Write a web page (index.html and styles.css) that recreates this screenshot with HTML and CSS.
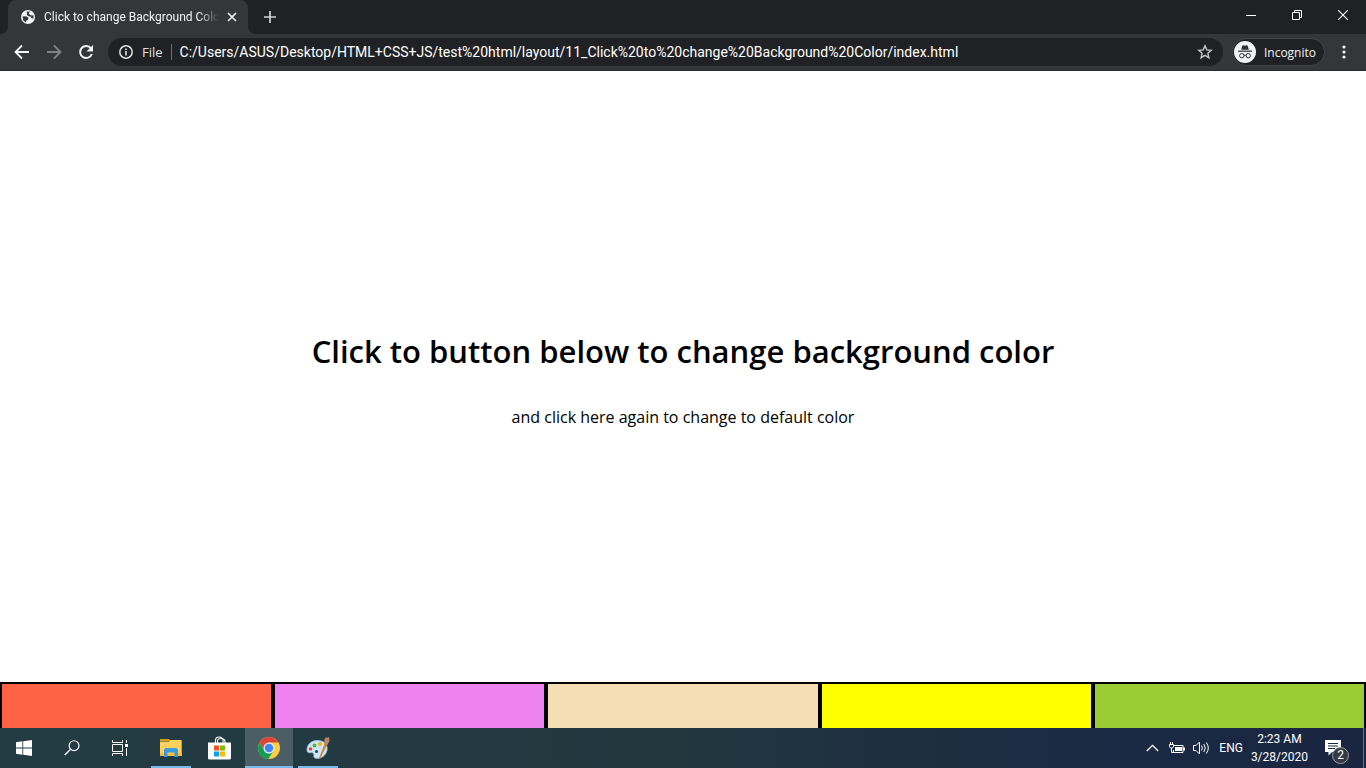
FILE: index.html
```html
<!DOCTYPE html>
<html lang="en">
<head>
<meta charset="utf-8">
<meta name="viewport" content="width=device-width, initial-scale=1">
<title>Click to change Background Color</title>
<link rel="stylesheet" href="styles.css">
</head>
<body>
<div class="desktop">
  <header class="browser">
    <div class="tabstrip">
      <div class="tab">
        <svg class="tab-icon" width="14" height="14" viewBox="0 0 14 14" aria-hidden="true"><circle cx="7" cy="7" r="7" fill="#f1f3f4"/><path d="M1.5 6.5 5 6.2 7.5 7.7 6.8 10 5.3 10.4 5 12.5 2.4 10.6zM5.4 1.8 8.8 1.4 7.8 3.6 9.5 5.3 12.6 5.6 12.3 8.7 10.4 8 9.8 6.5 7.6 6.3 5.6 4.8 6.2 3.7z" fill="#35363a"/></svg>
        <span class="tab-title">Click to change Background Color</span>
        <button class="plain tab-close" aria-label="Close tab"><svg width="10" height="10" viewBox="0 0 10 10"><path d="M1 1l8 8M9 1L1 9" stroke="#f1f3f4" stroke-width="1.7"/></svg></button>
      </div>
      <button class="plain new-tab" aria-label="New tab"><svg width="12" height="12" viewBox="0 0 12 12"><path d="M6 0v12M0 6h12" stroke="#d0d2d5" stroke-width="1.7"/></svg></button>
      <div class="window-controls">
        <button class="plain control" aria-label="Minimize"><svg width="10" height="10" viewBox="0 0 10 10"><path d="M0 5.5h10" stroke="#fff"/></svg></button>
        <button class="plain control" aria-label="Restore"><svg width="10" height="10" viewBox="0 0 10 10" fill="none" stroke="#fff"><path d="M.5 2.5h7v7h-7zM2.5 2.5v-2h7v7h-2"/></svg></button>
        <button class="plain control" aria-label="Close"><svg width="10" height="10" viewBox="0 0 10 10"><path d="M0 0l10 10M10 0L0 10" stroke="#fff" stroke-width="1.1"/></svg></button>
      </div>
    </div>
    <div class="toolbar">
      <button class="plain nav" aria-label="Back"><svg width="16" height="16" viewBox="0 0 16 16" fill="none" stroke="#f1f3f4" stroke-width="1.8"><path d="M15 8H2M8 1.5L1.5 8 8 14.5"/></svg></button>
      <button class="plain nav" aria-label="Forward"><svg width="16" height="16" viewBox="0 0 16 16" fill="none" stroke="#808286" stroke-width="1.8"><path d="M1 8h13M8 1.5L14.5 8 8 14.5"/></svg></button>
      <button class="plain nav" aria-label="Reload"><svg width="16" height="16" viewBox="0 0 16 16"><path d="M13 4.5A6 6 0 1 0 13.8 10" fill="none" stroke="#f1f3f4" stroke-width="2"/><path d="M15 1v6.5H8.5z" fill="#f1f3f4"/></svg></button>
      <div class="omnibox">
        <svg width="14" height="14" viewBox="0 0 14 14" aria-hidden="true"><circle cx="7" cy="7" r="6.2" fill="none" stroke="#dfe1e5" stroke-width="1.5"/><path d="M7 6v4.5M7 3.4v1.6" stroke="#dfe1e5" stroke-width="1.6"/></svg>
        <label class="scheme" for="address">File</label>
        <input class="address" id="address" type="text" value="C:/Users/ASUS/Desktop/HTML+CSS+JS/test%20html/layout/11_Click%20to%20change%20Background%20Color/index.html">
        <button class="plain" aria-label="Bookmark this page"><svg class="star" width="16" height="16" viewBox="0 0 16 16"><path d="M8 1.8l1.8 4.1 4.4.4-3.3 3 1 4.4L8 11.4l-3.9 2.3 1-4.4-3.3-3 4.4-.4z" fill="none" stroke="#c4c7cb" stroke-width="1.4"/></svg></button>
      </div>
      <button class="plain incognito"><svg width="22" height="22" viewBox="0 0 22 22"><circle cx="11" cy="11" r="11" fill="#f1f3f4"/><path d="M7.2 8.7L8.3 4.8q.3-.8 1.1-.5l1.6.4 1.6-.4q.8-.3 1.1.5l1.1 3.9z" fill="#303134"/><path d="M4 10.2h14" stroke="#303134" stroke-width="1.2"/><g fill="none" stroke="#303134" stroke-width="1"><circle cx="7.8" cy="14.7" r="2.2"/><circle cx="14.2" cy="14.7" r="2.2"/><path d="M10 14.4q1-.7 2 0"/></g></svg><span>Incognito</span></button>
      <button class="plain menu" aria-label="Menu"><svg width="4" height="14" viewBox="0 0 4 14" fill="#f1f3f4"><circle cx="2" cy="2" r="1.6"/><circle cx="2" cy="7" r="1.6"/><circle cx="2" cy="12" r="1.6"/></svg></button>
    </div>
  </header>

  <main class="page">
    <section class="message">
      <h1 class="headline">Click to button below to change background color</h1>
      <p class="hint">and click here again to change to default color</p>
    </section>
    <div class="swatches">
      <button class="swatch tomato" aria-label="Tomato"></button>
      <button class="swatch violet" aria-label="Violet"></button>
      <button class="swatch wheat" aria-label="Wheat"></button>
      <button class="swatch yellow" aria-label="Yellow"></button>
      <button class="swatch yellowgreen" aria-label="Yellow green"></button>
    </div>
  </main>

  <footer class="taskbar">
    <div class="system">
      <button class="plain task" aria-label="Start"><svg width="16" height="16" viewBox="0 0 16 16" fill="#fff"><path d="M0 2.2L6.4 1.3v6.2H0zM7.2 1.2L16 0v7.5H7.2zM0 8.4h6.4v6.3L0 13.8zM7.2 8.4H16V16l-8.8-1.2z"/></svg></button>
      <button class="plain task" aria-label="Search"><svg width="16" height="16" viewBox="0 0 17 17" fill="none" stroke="#f5f7f8"><circle cx="10.7" cy="6" r="5.2" stroke-width="1.3"/><path d="M7 9.8L.8 16" stroke-width="1.5"/></svg></button>
      <button class="plain task" aria-label="Task view"><svg width="16" height="16" viewBox="0 0 16 16" fill="none" stroke="#fff"><path d="M.5 0v2.5h10V0M.5 4.5h10v7H.5zM.5 16v-2.5h10V16M14.5 0v3M14.5 8v8"/><path d="M13 4h3v3h-3z" fill="#fff" stroke="none"/></svg></button>
    </div>
    <div class="apps">
      <button class="plain task running" aria-label="File Explorer"><svg width="22" height="20" viewBox="0 0 22 20"><path d="M0 1.5Q0 1 .5 1H9l1.5 2H0z" fill="#dc9d12"/><path d="M0 3.6h9L10.5 2H21q.7 0 .7.7V18H0z" fill="#ffd15b"/><path d="M0 15h22v3H0z" fill="#f6be3c"/><path d="M4 19v-7.5L5.5 10h11l1.5 1.5V19h-3.5v-4.5h-7V19z" fill="#3a9be0"/></svg></button>
      <button class="plain task" aria-label="Microsoft Store"><svg width="24" height="24" viewBox="0 0 24 24"><path d="M7.5 7V4.5q0-3.500 3.500-3.500t4 3.500V7M9.500 7V5q0-2.500 3.500-2.500T17 5v2" fill="none" stroke="#fff" stroke-width="1.1"/><path d="M0 6.5h23V22q0 1.500-1.500 1.500h-20Q0 23.500 0 22z" fill="#fff"/><path d="M6 9.500h5v5H6z" fill="#f25022"/><path d="M12 9.500h5v5h-5z" fill="#7fba00"/><path d="M6 15.500h5v5H6z" fill="#00a4ef"/><path d="M12 15.500h5v5h-5z" fill="#ffb900"/></svg></button>
      <button class="plain task active" aria-label="Google Chrome"><svg width="22" height="22" viewBox="0 0 22 22"><circle cx="11" cy="11" r="11" fill="#ffcd40"/><path d="M1.5 5.5A11 11 0 0 1 20.5 5.5H11L6.2 13.7z" fill="#db4437"/><path d="M1.5 5.5L6.2 13.7Q8 16.500 11 16.500L10.200 22A11 11 0 0 1 1.500 5.500z" fill="#109d58"/><path d="M10.200 22L15.800 13.700 11 16.500 9 16z" fill="#109d58"/><circle cx="11" cy="11" r="5.500" fill="#f1f1f1"/><circle cx="11" cy="11" r="4.300" fill="#4285f4"/></svg></button>
      <button class="plain task running" aria-label="Paint"><svg width="24" height="24" viewBox="0 0 24 24"><path d="M1 15C0 8 7 3.500 13 4.500c7 .5 9 6 8 10-1 5-6 8.500-11 8-4-1-1-4-3-5.500-2-1-5 1-6-2z" fill="#cbe6f6" stroke="#86b8d6" stroke-width=".7"/><circle cx="4.500" cy="13" r="1.800" fill="#e54435"/><circle cx="8.500" cy="9.500" r="1.900" fill="#56b430"/><circle cx="14" cy="8" r="2" fill="#f4b01b"/><circle cx="10.500" cy="15.500" r="1.600" fill="#254b62"/><path d="M12.500 23.500L18.500 8l2.500 1L14.500 22z" fill="#dc8130"/><path d="M18 8.500L18.500 3 20 1l1 1 2-1 .5 4L21 9.500z" fill="#b98761"/></svg></button>
    </div>
    <div class="tray">
      <button class="plain" aria-label="Show hidden icons"><svg width="13" height="8" viewBox="0 0 13 8"><path d="M.8 7L6.5 1.3 12.2 7" fill="none" stroke="#fff" stroke-width="1.3"/></svg></button>
      <svg class="battery" width="16" height="12" viewBox="0 0 16 12" role="img" aria-label="Battery charging"><path d="M5 3.500h9v7H4.500V8" fill="none" stroke="#fff"/><path d="M6 5h7v4H6zM14 5.500h2v3h-2z" fill="#fff"/><path d="M.5 2.500h4v2l-1 1.500h-2l-1-1.500zM1.500 0v2.500M3.500 0v2.500M2.500 6v4.500H5" fill="none" stroke="#fff"/></svg>
      <svg class="volume" width="17" height="14" viewBox="0 0 17 14" fill="none" stroke="#fff" role="img" aria-label="Volume"><path d="M.5 4.500h2.500l3.500-3.500v12L3 9.500H.5z"/><path d="M8.500 4.500q1.800 2.500 0 5M10.800 3q3 4 0 8M13.300 1.500q4 5.500 0 11"/></svg>
      <span class="language">ENG</span>
      <time class="clock" datetime="2020-03-28T02:23">2:23 AM<br>3/28/2020</time>
      <button class="plain notifications" aria-label="2 notifications"><svg width="17" height="16" viewBox="0 0 17 16"><path d="M0 0h16v12H7l-3.500 3.500V12H0z" fill="#fff"/><path d="M3 3.500h10M3 6h10M3 8.500h7" stroke="#1b2a43"/></svg><span class="badge">2</span></button>
      <span class="peek"></span>
    </div>
  </footer>
</div>
</body>
</html>
```
FILE: styles.css
```css
* { box-sizing: border-box; }
body { margin: 0; font-family: "Open Sans", "Noto Sans", sans-serif; }
svg { display: block; flex: none; }
.plain { display: flex; align-items: center; justify-content: center; padding: 0; border: 0; background: none; color: inherit; font: inherit; }
.desktop { display: flex; flex-direction: column; height: 100vh; overflow: hidden; }

/* Browser frame */
.browser { background: #35363a; color: #f1f3f4; border-bottom: 1px solid #28292c; }
.tabstrip { display: flex; height: 34px; padding-left: 8px; background: #202124; }
.tab { position: relative; display: flex; align-items: center; width: 240px; padding: 0 11px 0 13px; border-radius: 8px 8px 0 0; background: #35363a; }
.tab::before, .tab::after { content: ""; position: absolute; bottom: 0; width: 8px; height: 8px; }
.tab::before { right: 100%; background: radial-gradient(circle at 0 0, #202124 8px, #35363a 8px); }
.tab::after { left: 100%; background: radial-gradient(circle at 100% 0, #202124 8px, #35363a 8px); }
.tab-title { flex: 1; min-width: 0; margin: 0 8px 0 9px; overflow: hidden; white-space: nowrap; font-family: Roboto, sans-serif; font-size: 12px; mask-image: linear-gradient(to right, #000 88%, transparent); }
.new-tab { width: 28px; margin-left: 8px; }
.window-controls { display: flex; margin-left: auto; }
.control { width: 46px; height: 29px; }
.toolbar { display: flex; align-items: center; height: 36px; padding: 0 14px 0 6px; }
.nav { width: 32px; height: 28px; }
.omnibox { display: flex; align-items: center; flex: 1; height: 28px; margin-left: 6px; padding: 0 10px 0 11px; border-radius: 14px; background: #202124; font-size: 13px; }
.scheme { margin-left: 9px; padding-right: 8px; border-right: 1px solid #6b6d70; line-height: 16px; color: #dfe1e5; }
.address { flex: 1; min-width: 0; padding: 0 8px; border: 0; outline: 0; background: none; color: #fff; font-family: Roboto, sans-serif; font-size: 14px; }
.incognito { gap: 8px; height: 28px; margin-left: 9px; padding: 0 8px 0 1px; border: 1px solid #434448; border-radius: 14px; background: #202124; font-size: 12px; }
.menu { width: 16px; height: 28px; margin-left: 11px; }

/* Page */
.page { display: flex; flex: 1; flex-direction: column; min-height: 0; background: #fff; color: #000; }
.message { display: flex; flex: 1; flex-direction: column; align-items: center; justify-content: center; gap: 36px; padding-top: 4px; text-align: center; }
.headline { margin: 0; font-size: 31px; font-weight: 600; line-height: 40px; }
.hint { margin: 0; font-size: 16px; line-height: 20px; }
.swatches { display: flex; height: 46px; border-top: 2px solid #000; }
.swatch { flex: 1; margin: 0; padding: 0; border: solid #000; border-width: 0 2px; border-radius: 0; }
.tomato { background: tomato; }
.violet { background: violet; }
.wheat { background: wheat; }
.yellow { background: yellow; }
.yellowgreen { background: yellowgreen; }

/* Taskbar */
.taskbar { display: flex; height: 40px; background: linear-gradient(to right, #233b43 0%, #21383f 50%, #1e3040 64%, #1b2a44 82%, #1a2540 100%); color: #fff; font-size: 12px; }
.system, .apps, .tray { display: flex; }
.apps { gap: 1px; margin-left: 3px; }
.task { position: relative; width: 48px; height: 40px; }
.active { background: #4b5e65; }
.running::after, .active::after { content: ""; position: absolute; right: 4px; bottom: 0; left: 4px; height: 2px; background: #76b9ed; }
.active::after { right: 0; left: 0; }
.tray { align-items: center; margin-left: auto; font-family: Roboto, sans-serif; }
.battery { margin-left: 10px; }
.volume { margin-left: 8px; }
.language { margin-left: 9px; }
.clock { margin-left: 8px; line-height: 18px; text-align: center; }
.notifications { position: relative; width: 17px; height: 16px; margin: 0 21px 0 17px; }
.badge { position: absolute; top: 7px; left: 7px; width: 17px; height: 17px; border: 1px solid #989da5; border-radius: 50%; background: #343a43; font-size: 12px; line-height: 15px; text-align: center; }
.peek { width: 1px; height: 40px; margin-right: 2px; background: #66707f; }
```
